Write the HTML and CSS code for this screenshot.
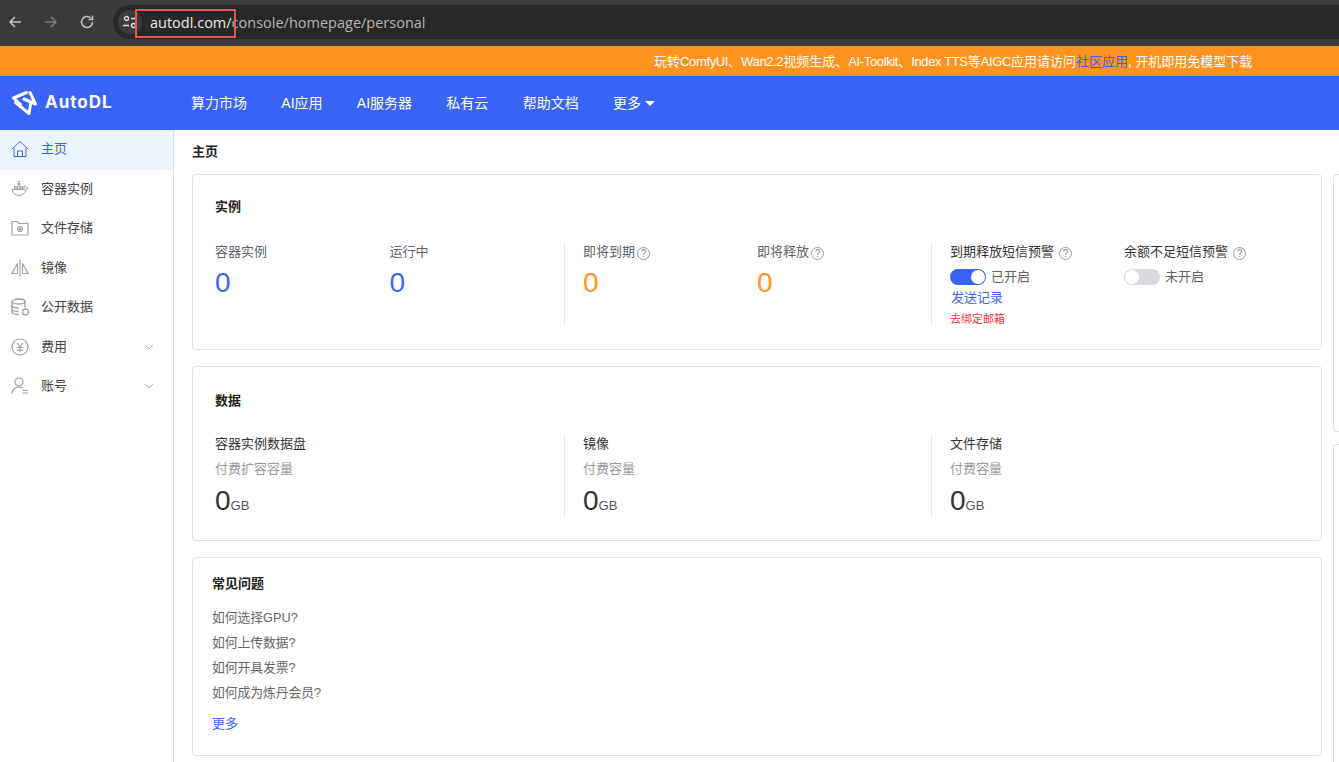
FILE: index.html
```html
<!DOCTYPE html>
<html lang="zh-CN">
<head>
    <meta charset="UTF-8">
    <title>AutoDL</title>
    <link rel="stylesheet" href="styles.css">
</head>
<body>
    <div class="browser-bar">
        <svg class="nav-icon" viewBox="0 0 16 16"><path d="M15 8H4M9 3L4 8l5 5" fill="none" stroke="#c4c4c4" stroke-width="1.5"/></svg>
        <svg class="nav-icon dim" viewBox="0 0 16 16"><path d="M3 8h11M9 3l5 5-5 5" fill="none" stroke="#7c7c7c" stroke-width="1.5"/></svg>
        <svg class="nav-icon" viewBox="0 0 16 16"><path d="M14.500 8a5.500 5.500 0 1 1-1.700-4M14.500 1.500v4h-4" fill="none" stroke="#c4c4c4" stroke-width="1.5"/></svg>
        <div class="url-box">
            <span class="site-chip">
                <svg viewBox="0 0 16 16" width="16" height="16"><circle cx="4.500" cy="4.500" r="2" fill="none" stroke="#ddd" stroke-width="1.300"/><path d="M9 4.500h6M1 11.500h6" stroke="#ddd" stroke-width="1.300"/><circle cx="11.500" cy="11.500" r="2" fill="none" stroke="#ddd" stroke-width="1.300"/></svg>
            </span>
            <span class="url-host">autodl.com/</span><span class="url-path">console/homepage/personal</span>
            <span class="url-mark"></span>
        </div>
    </div>

    <div class="notice">
        <span>玩转<b>ComfyUI</b>、<b>Wan2.2</b>视频生成、<b>AI-Toolkit</b>、<b>Index TTS</b>等<b>AIGC</b>应用请访问<a class="notice-link">社区应用</a>, 开机即用免模型下载</span>
    </div>

    <header class="topbar">
        <div class="logo">
            <svg viewBox="0 0 27 27" width="27" height="27" fill="none" stroke="#fff" stroke-width="3" stroke-linecap="round" stroke-linejoin="round"><path d="M15.500 3.500L2.500 9 9.500 15.500"/><path d="M19 3.500L24.500 15 13 10"/><path d="M4.500 13.500L18 24.500 19.500 15.500"/></svg>
            <span class="logo-text">AutoDL</span>
        </div>
        <nav class="topnav">
            <a>算力市场</a>
            <a>AI应用</a>
            <a>AI服务器</a>
            <a>私有云</a>
            <a>帮助文档</a>
            <a>更多<i class="caret"></i></a>
        </nav>
    </header>

    <div class="layout">
        <aside class="sidebar">
            <div class="menu-item active">
                <svg class="menu-icon" viewBox="0 0 18 18" fill="none" stroke="#3c64f5"><path d="M1 9l8-7.500L17 9M3 7.500V16.500h12V7.500M6.500 16.500v-5.500h5v5.500"/></svg>
                <span>主页</span>
            </div>
            <div class="menu-item">
                <svg class="menu-icon" viewBox="0 0 18 18" fill="none" stroke="#a0a0a0"><path d="M.8 9.500h13.700c1 0 2.200-.6 2.800-1.500-.5-.6-1.500-.8-2.200-.5-.3-.9-1-1.500-1.600-1.800-.5 1-.5 2-.1 2.700M1.500 10c.3 3.300 2.800 5.500 6.500 5.500 3.500 0 6-2.300 7-5.500"/><path d="M3 6h9.500v3H3zM6.500 3h3v2.500h-3zM7 1h2v1.500H7z" fill="#a9a9a9" stroke="none"/><path d="M5 6v3M7.500 6v3M10 6v3" stroke="#fff" stroke-width=".6"/></svg>
                <span>容器实例</span>
            </div>
            <div class="menu-item">
                <svg class="menu-icon" viewBox="0 0 18 18" fill="none" stroke="#a0a0a0" stroke-width="1.200"><path d="M1 2.500h5.500l1.500 2h9v11.500H1z"/><circle cx="9" cy="10" r="2.500"/><circle cx="9" cy="10" r=".8" fill="#a0a0a0"/></svg>
                <span>文件存储</span>
            </div>
            <div class="menu-item">
                <svg class="menu-icon" viewBox="0 0 18 18" fill="none" stroke="#a0a0a0" stroke-width="1.100"><path d="M9 .5v17M6.500 4.500v10H1zM11.500 4.500v10H17z"/></svg>
                <span>镜像</span>
            </div>
            <div class="menu-item">
                <svg class="menu-icon" viewBox="0 0 18 18" fill="none" stroke="#a0a0a0" stroke-width="1.300"><ellipse cx="7.500" cy="3.500" rx="6.500" ry="2.500"/><path d="M1 3.500v10.500c0 1.400 3 2.500 6.500 2.500M1 7.500c0 1.400 3 2.500 6.500 2.500M1 11c0 1.400 3 2.500 6.500 2.500M14 3.500v6"/><circle cx="14.500" cy="14" r="3"/></svg>
                <span>公开数据</span>
            </div>
            <div class="menu-item">
                <svg class="menu-icon" viewBox="0 0 18 18" fill="none" stroke="#a0a0a0" stroke-width="1.200"><circle cx="9" cy="9" r="8"/><path d="M6 5l3 4 3-4M5.500 9.500h7M5.500 12h7M9 9v5"/></svg>
                <span>费用</span>
                <svg class="menu-arrow" viewBox="0 0 10 6"><path d="M1 1l4 4 4-4" fill="none" stroke="#b4b4b4"/></svg>
            </div>
            <div class="menu-item">
                <svg class="menu-icon" viewBox="0 0 18 18" fill="none" stroke="#a0a0a0" stroke-width="1.200"><circle cx="8" cy="5" r="4"/><path d="M1 17c0-4 3-7 7-7 1.500 0 2.500.4 3.500 1M11.500 13.500h5.500M11.500 16h5.500"/></svg>
                <span>账号</span>
                <svg class="menu-arrow" viewBox="0 0 10 6"><path d="M1 1l4 4 4-4" fill="none" stroke="#b4b4b4"/></svg>
            </div>
        </aside>

        <main class="content">
            <div class="page-title">主页</div>
            <div class="main-row">
                <div class="cards">
                    <section class="card card-instance">
                        <h3>实例</h3>
                        <div class="stat-row">
                            <div class="stat-group">
                                <div class="stat">
                                    <div class="stat-label">容器实例</div>
                                    <div class="stat-num blue">0</div>
                                </div>
                                <div class="stat">
                                    <div class="stat-label">运行中</div>
                                    <div class="stat-num blue">0</div>
                                </div>
                            </div>
                            <div class="stat-group divided">
                                <div class="stat">
                                    <div class="stat-label">即将到期<i class="help">?</i></div>
                                    <div class="stat-num orange">0</div>
                                </div>
                                <div class="stat">
                                    <div class="stat-label">即将释放<i class="help">?</i></div>
                                    <div class="stat-num orange">0</div>
                                </div>
                            </div>
                            <div class="stat-group divided alerts">
                                <div class="alert">
                                    <div class="alert-title">到期释放短信预警<i class="help">?</i></div>
                                    <div class="switch-row">
                                        <span class="switch on"></span>
                                        <span class="switch-text">已开启</span>
                                    </div>
                                    <a class="send-log">发送记录</a>
                                    <a class="bind-mail">去绑定邮箱</a>
                                </div>
                                <div class="alert">
                                    <div class="alert-title">余额不足短信预警<i class="help">?</i></div>
                                    <div class="switch-row">
                                        <span class="switch"></span>
                                        <span class="switch-text">未开启</span>
                                    </div>
                                </div>
                            </div>
                        </div>
                    </section>

                    <section class="card card-data">
                        <h3>数据</h3>
                        <div class="stat-row">
                            <div class="data-col">
                                <div class="data-name">容器实例数据盘</div>
                                <div class="data-sub">付费扩容容量</div>
                                <div class="data-num">0<small>GB</small></div>
                            </div>
                            <div class="data-col divided">
                                <div class="data-name">镜像</div>
                                <div class="data-sub">付费容量</div>
                                <div class="data-num">0<small>GB</small></div>
                            </div>
                            <div class="data-col divided">
                                <div class="data-name">文件存储</div>
                                <div class="data-sub">付费容量</div>
                                <div class="data-num">0<small>GB</small></div>
                            </div>
                        </div>
                    </section>

                    <section class="card card-faq">
                        <h3>常见问题</h3>
                        <ul class="faq">
                            <li>如何选择GPU?</li>
                            <li>如何上传数据?</li>
                            <li>如何开具发票?</li>
                            <li>如何成为炼丹会员?</li>
                        </ul>
                        <a class="more">更多</a>
                    </section>
                </div>
                <div class="side-cards">
                    <div class="side-card first"></div>
                    <div class="side-card"></div>
                </div>
            </div>
        </main>
    </div>
</body>
</html>
```

FILE: styles.css
```css
* {
    box-sizing: border-box;
}

html, body {
    height: 100%;
}

body {
    margin: 0;
    height: 762px;
    overflow: hidden;
    background-color: #fff;
    font-family: 'Liberation Sans', 'Noto Sans CJK SC', sans-serif;
    font-size: 13px;
    color: #333;
}

h3 {
    margin: 0;
    font-size: 13px;
    line-height: 16px;
    font-weight: bold;
    color: #222;
}

a {
    cursor: pointer;
}

/* browser chrome */
.browser-bar {
    position: relative;
    height: 46px;
    padding: 5px 0 0 6px;
    display: flex;
    align-items: flex-start;
    background-color: #3b3b3b;
}

.nav-icon {
    width: 16px;
    height: 16px;
    margin: 9px 20px 0 0;
    flex: none;
}

.url-box {
    position: relative;
    flex: 1;
    height: 34px;
    margin-left: -1px;
    padding-left: 5px;
    display: flex;
    align-items: center;
    background-color: #282828;
    border-radius: 17px 0 0 17px;
    font-family: 'Open Sans', 'Liberation Sans', sans-serif;
    font-size: 14.500px;
}

.site-chip {
    width: 24px;
    height: 24px;
    margin-right: 8px;
    display: flex;
    align-items: center;
    justify-content: center;
    border-radius: 50%;
    background-color: #3c3c3c;
}

.url-host {
    color: #e8e8e8;
}

.url-path {
    color: #b5b5b5;
}

.url-mark {
    position: absolute;
    left: 22px;
    top: 4px;
    width: 101px;
    height: 29px;
    border: 2px solid #e5535b;
}

/* top of the page */
.notice {
    height: 30px;
    padding-left: 654px;
    padding-bottom: 2px;
    display: flex;
    align-items: center;
    background-color: #ff9320;
    color: #fff;
    font-size: 13px;
}

.notice b {
    font-weight: normal;
    letter-spacing: -0.36px;
}

.notice-link {
    color: #3a62f6;
}

.topbar {
    height: 54px;
    display: flex;
    align-items: center;
    background-color: #3964f7;
    color: #fff;
}

.logo {
    width: 191px;
    padding-left: 11px;
    padding-bottom: 2px;
    display: flex;
    align-items: center;
    gap: 7px;
}

.logo-text {
    font-family: 'Inter', 'Liberation Sans', sans-serif;
    font-size: 17px;
    font-weight: 700;
    letter-spacing: 1px;
}

.topnav {
    display: flex;
    gap: 34.300px;
    padding-bottom: 2px;
    font-size: 14px;
}

.caret {
    display: inline-block;
    margin-left: 4px;
    vertical-align: 2px;
    border: 5px solid transparent;
    border-top-color: #fff;
    border-bottom-width: 0;
}

/* page layout */
.layout {
    display: flex;
    height: 632px;
}

.sidebar {
    width: 174px;
    flex: none;
    border-right: 1px solid #dcdfe6;
}

.menu-item {
    height: 39.5px;
    padding-left: 11px;
    padding-bottom: 5px;
    display: flex;
    align-items: center;
    font-size: 13px;
    color: #444;
}

.menu-item.active {
    height: 40px;
    padding-bottom: 6px;
    background-color: #ecf5ff;
    color: #3c64f5;
}

.menu-icon {
    width: 18px;
    height: 18px;
    margin-top: 3px;
    margin-right: 12px;
    flex: none;
}

.menu-arrow {
    width: 10px;
    height: 6px;
    margin-top: 3px;
    margin-left: auto;
    margin-right: 19px;
}

.content {
    flex: 1;
    min-width: 0;
    padding-left: 18px;
}

.page-title {
    height: 44px;
    padding-top: 14px;
    font-size: 13px;
    line-height: 16px;
    font-weight: bold;
    color: #222;
}

.main-row {
    display: flex;
    gap: 11px;
}

.cards {
    width: 1130px;
    flex: none;
    display: flex;
    flex-direction: column;
    gap: 16px;
}

.card {
    border: 1px solid #dcdfe6;
    border-radius: 4px;
    background-color: #fff;
}

.card-instance {
    height: 176px;
    padding: 24px 22px 0;
}

.card-data {
    height: 175px;
    padding: 26px 22px 0;
}

.card-faq {
    height: 199px;
    padding: 18px 19px 0;
}

.stat-row {
    display: flex;
}

.card-instance .stat-row {
    margin-top: 29px;
}

.card-data .stat-row {
    margin-top: 25px;
}

.stat-group {
    width: 349px;
    display: flex;
    flex: none;
    height: 74px;
}

.card-instance .stat-group {
    height: 83px;
    margin-top: -1px;
}

.stat-group.divided {
    width: 367px;
    padding-left: 18px;
    border-left: 1px solid #e4e7ed;
}

.stat {
    width: 174.500px;
}

.stat-label {
    line-height: 20px;
    color: #606266;
    margin-top: -1px;
}

.stat-num {
    margin-top: 5px;
    font-size: 28px;
    line-height: 32px;
}

.blue {
    color: #3c64f5;
}

.orange {
    color: #ff9320;
}

.help {
    display: inline-block;
    width: 13px;
    height: 13px;
    margin-left: 2px;
    border: 1px solid #999;
    border-radius: 50%;
    font-size: 10px;
    line-height: 11px;
    font-style: normal;
    text-align: center;
    color: #888;
    vertical-align: -1px;
}

.alerts {
    gap: 0;
}

.alert {
    width: 174px;
}

.alert-title {
    margin-top: -1px;
    line-height: 20px;
    color: #333;
}

.alert-title .help {
    margin-left: 5px;
}

.switch-row {
    margin-top: 6px;
    height: 18px;
    display: flex;
    align-items: center;
    gap: 5px;
    color: #606266;
}

.switch-text {
    margin-bottom: 4px;
}

.switch {
    position: relative;
    width: 36px;
    height: 16px;
    border-radius: 8px;
    background-color: #d8dae0;
}

.switch::after {
    content: "";
    position: absolute;
    left: 1px;
    top: 1px;
    width: 14px;
    height: 14px;
    border-radius: 50%;
    background-color: #fff;
}

.switch.on {
    background-color: #3964f7;
}

.switch.on::after {
    left: 21px;
}

.send-log {
    display: block;
    margin-top: 4px;
    margin-left: 1px;
    line-height: 16px;
    color: #3c64f5;
}

.bind-mail {
    display: block;
    margin-top: 6px;
    font-size: 11px;
    line-height: 14px;
    color: #f5333f;
}

.data-col {
    width: 349px;
    flex: none;
    height: 84px;
}

.data-col.divided {
    width: 367px;
    padding-left: 18px;
    border-left: 1px solid #e4e7ed;
}

.data-name {
    line-height: 20px;
    color: #333;
}

.data-sub {
    margin-top: 5px;
    line-height: 20px;
    color: #999;
}

.data-num {
    margin-top: 5px;
    font-size: 28px;
    line-height: 34px;
    color: #333;
}

.data-num small {
    font-size: 13px;
    color: #555;
}

.faq {
    margin: 13px 0 0;
    padding: 0;
    list-style: none;
}

.faq li {
    height: 25px;
    line-height: 25px;
    font-size: 12.750px;
    color: #666;
}

.more {
    display: block;
    margin-top: 11px;
    line-height: 16px;
    color: #3c64f5;
}

.side-cards {
    flex: 1;
    display: flex;
    flex-direction: column;
    gap: 12px;
}

.side-card {
    height: 330px;
    border: 1px solid #dcdfe6;
    border-right: 0;
    border-radius: 4px 0 0 4px;
}

.side-card.first {
    height: 258px;
}
```
